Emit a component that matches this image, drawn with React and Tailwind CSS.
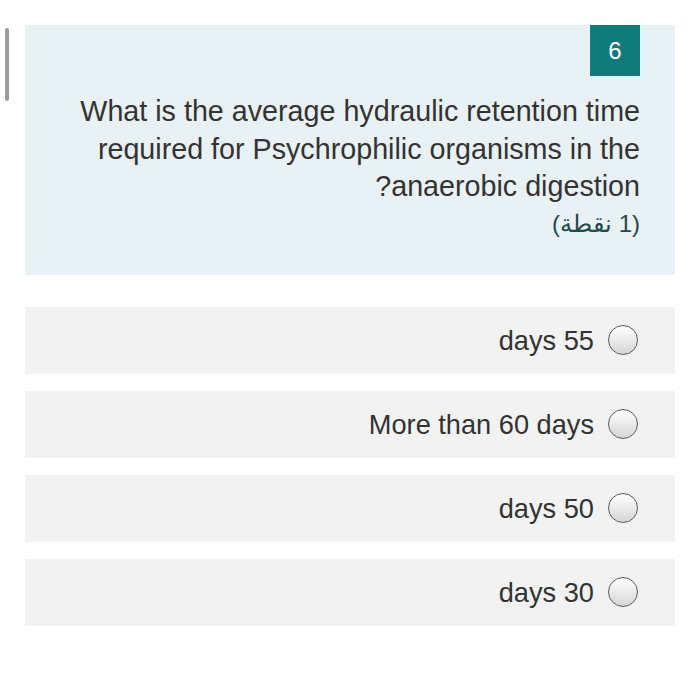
const options = ['55 days', 'More than 60 days', '50 days', '30 days'];

function Radio() {
  return (
    <span className="w-[30px] h-[30px] rounded-full border-[1.5px] border-[#5a5a5a] bg-linear-to-b from-white to-[#d6d6d6] flex-shrink-0" />
  );
}

export default function App() {
  return (
    <div
      className="relative w-[700px] h-[688px] bg-white pt-[25px] px-[25px] text-[#333]"
      style={{ fontFamily: '"Liberation Sans", Arial, "Noto Sans", sans-serif' }}
    >
      <div className="absolute left-[5px] top-[28px] w-[4px] h-[73px] rounded-full bg-[#9b9b9b]" />

      <div dir="rtl" className="bg-[#e8f1f3] px-[35px] pb-[34px]">
        <div className="w-[50px] h-[51px] bg-[#107b7b] text-white text-[24px] flex items-center justify-center">
          6
        </div>
        <p className="mt-[17px] text-[28.7px] leading-[37.5px]">
          What is the average hydraulic retention time required for Psychrophilic organisms in the anaerobic digestion?
        </p>
        <p className="text-[24px] leading-[35px] text-[#1f4a4a]">(1 نقطة)</p>
      </div>

      <div className="mt-[32px] flex flex-col gap-[17px]">
        {options.map((o) => (
          <div
            key={o}
            dir="rtl"
            className="h-[67px] bg-[#f2f2f2] flex items-center gap-[14px] pr-[37px]"
          >
            <Radio />
            <span className="text-[27.2px] pt-[2px]">{o}</span>
          </div>
        ))}
      </div>
    </div>
  );
}
